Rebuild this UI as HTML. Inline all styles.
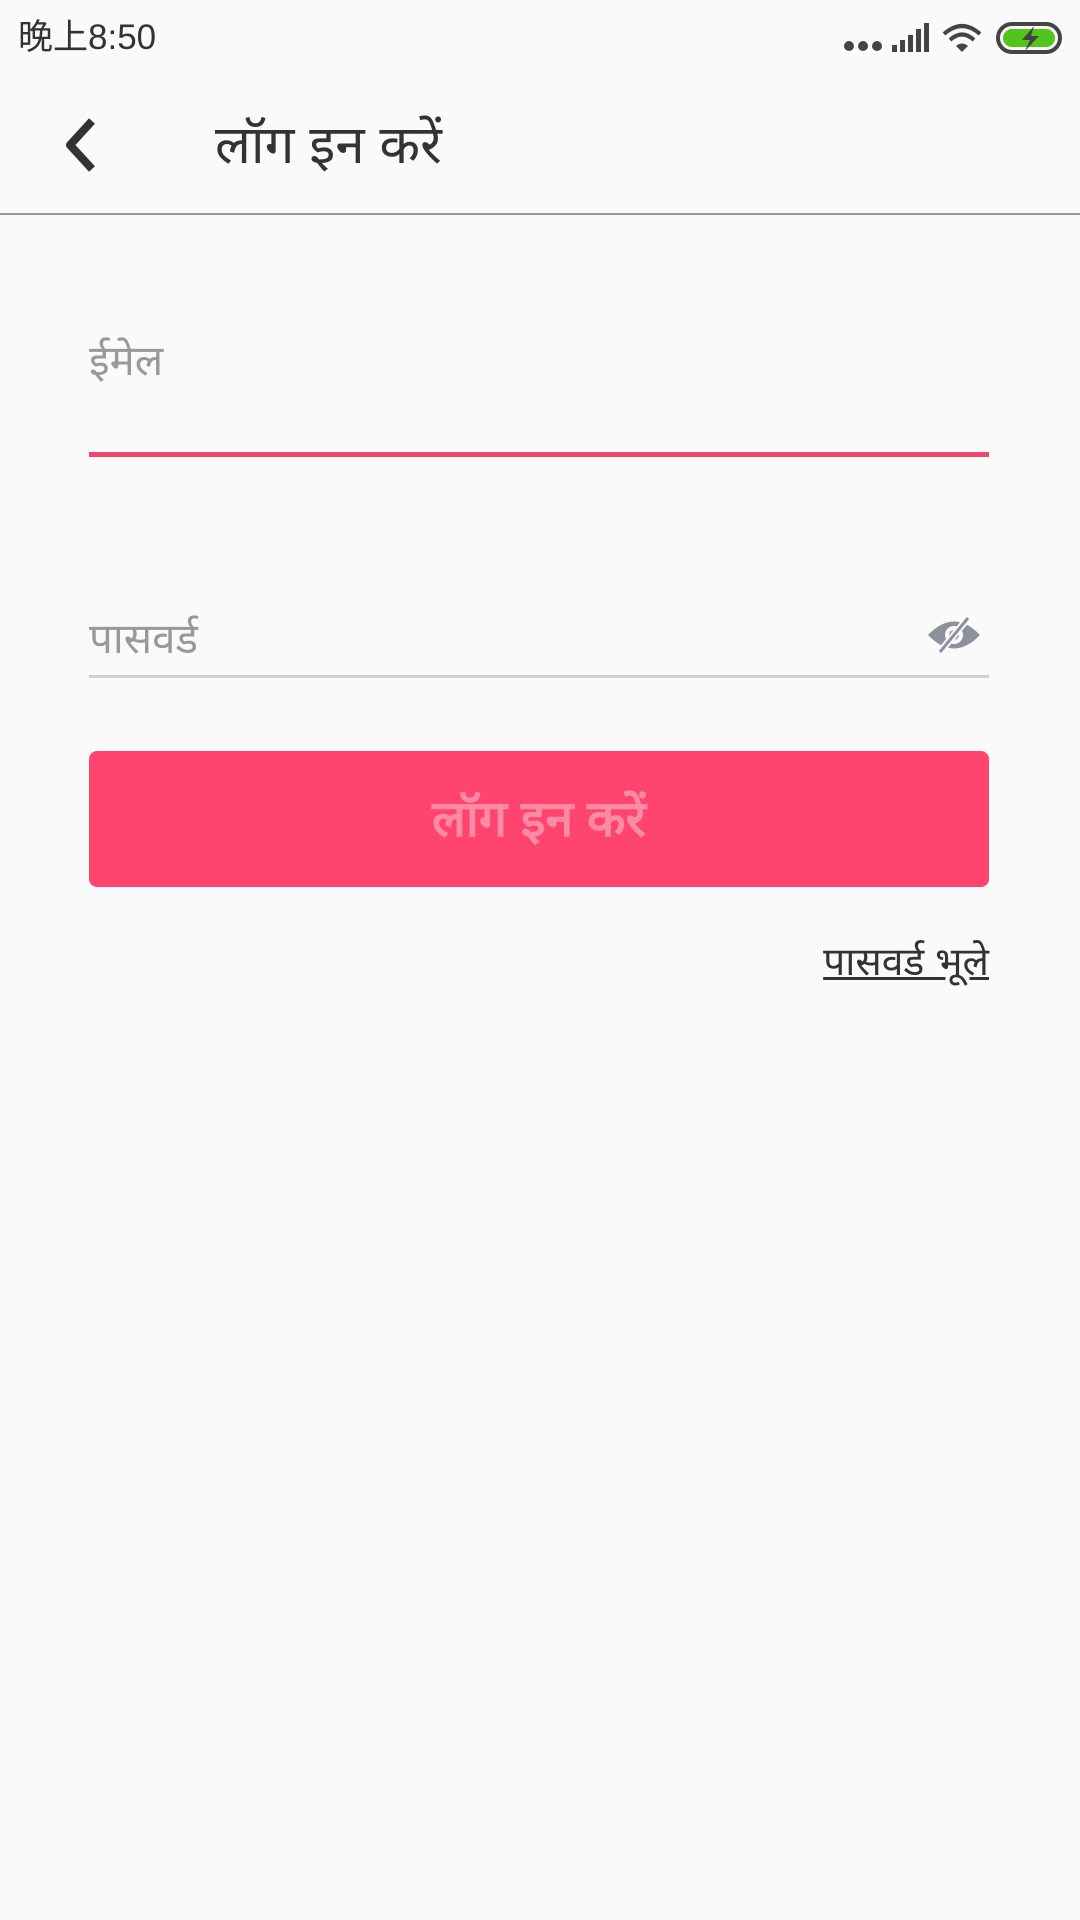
<!DOCTYPE html>
<html><head><meta charset="utf-8"><style>
html,body{margin:0;padding:0;width:1080px;height:1920px;background:#fafafa;overflow:hidden;font-family:"Liberation Sans","Noto Sans CJK SC",sans-serif;}
.abs{position:absolute;}
</style></head><body>
<div class="abs" style="left:18px;top:18px;font-size:35px;color:#333;line-height:40px;">晚上8:50</div>
<svg class="abs" style="left:840px;top:18px" width="230" height="40" viewBox="0 0 230 40">
<circle cx="9" cy="28" r="5" fill="#444"/><circle cx="23" cy="28" r="5" fill="#444"/><circle cx="37" cy="28" r="5" fill="#444"/>
<rect x="52" y="27" width="5" height="7" fill="#444"/><rect x="60" y="22" width="5" height="12" fill="#444"/><rect x="68" y="17" width="5" height="17" fill="#444"/><rect x="76" y="11" width="5" height="23" fill="#444"/><rect x="84" y="5" width="5" height="29" fill="#444"/>
<path d="M104 16 Q122 0 140 16" stroke="#444" stroke-width="4" fill="none"/><path d="M110 22 Q122 11 134 22" stroke="#444" stroke-width="4" fill="none"/><path d="M116 28 Q122 23 128 28 L122 34Z" fill="#444"/>
<rect x="158" y="6" width="62" height="28" rx="14" fill="none" stroke="#444" stroke-width="4"/>
<rect x="163" y="11" width="52" height="18" rx="9" fill="#52c41a"/>
<path d="M194 8 L182 22 L190 22 L185 33 L199 18 L191 18 Z" fill="#444"/>
</svg>
<svg class="abs" style="left:62px;top:117px" width="40" height="56" viewBox="0 0 40 56"><path d="M30 4 L8 28 L30 52" stroke="#333" stroke-width="8" fill="none" stroke-linejoin="round"/></svg>
<div class="abs" style="left:215px;top:116px;font-size:53px;color:#333;line-height:60px;">लॉग इन करें</div>
<div class="abs" style="left:0;top:213px;width:1080px;height:2px;background:#999;"></div>
<div class="abs" style="left:89px;top:336px;font-size:42px;color:#999;line-height:50px;">ईमेल</div>
<div class="abs" style="left:89px;top:452px;width:900px;height:5px;background:#f0466e;"></div>
<div class="abs" style="left:89px;top:614px;font-size:42px;color:#999;line-height:50px;">पासवर्ड</div>
<svg class="abs" style="left:926px;top:614px" width="56" height="42" viewBox="0 0 56 42"><path d="M2 21 Q28 -6 54 21 Q28 48 2 21Z" fill="#8d919c"/><circle cx="28" cy="21" r="9" fill="#fafafa"/><circle cx="28" cy="21" r="5" fill="#8d919c"/><path d="M14 38 L42 4" stroke="#fafafa" stroke-width="7"/><path d="M14 38 L42 4" stroke="#8d919c" stroke-width="3"/></svg>
<div class="abs" style="left:89px;top:675px;width:900px;height:3px;background:#d0d0d8;"></div>
<div class="abs" style="left:89px;top:751px;width:900px;height:136px;background:#ff456d;border-radius:8px;text-align:center;line-height:136px;font-size:50px;font-weight:bold;color:#ff8aa6;">लॉग इन करें</div>
<div class="abs" style="right:91px;top:940px;font-size:39px;color:#333;line-height:46px;text-decoration:underline;">पासवर्ड भूले</div>
</body></html>
